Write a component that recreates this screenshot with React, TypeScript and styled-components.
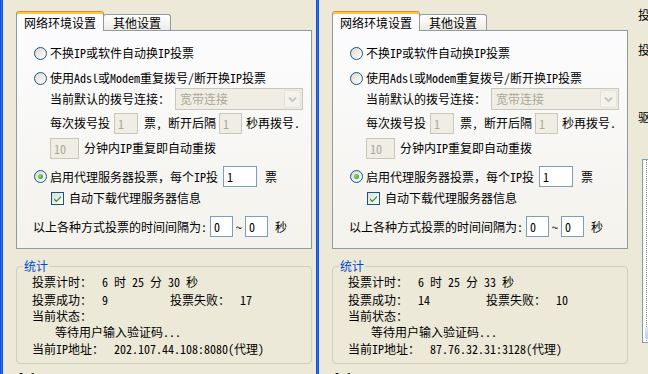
import React from "react";
import styled, { createGlobalStyle } from "styled-components";

const GlobalStyle = createGlobalStyle`
  html, body {
    margin: 0;
    padding: 0;
    background: #ece9d8;
  }
  body {
    font-family: "Noto Sans Mono CJK SC", "Noto Sans CJK SC", sans-serif;
    font-size: 12px;
    color: #000;
  }
`;

const Screen = styled.div`
  display: flex;
  width: 648px;
  height: 374px;
  overflow: hidden;
  background: #ece9d8;
`;

const Window = styled.div<{ $width: number }>`
  display: flex;
  flex: none;
  width: ${(p) => p.$width}px;
  height: 100%;
  overflow: hidden;
`;

const FrameEdge = styled.div`
  flex: none;
  width: 3px;
  height: 100%;
  background: linear-gradient(to right, #0a3fd2, #2a6ef0, #0b48dc);
`;

const Body = styled.div`
  display: flex;
  align-items: flex-start;
  gap: 10px;
  padding: 11px 0 0 13px;
`;

const MainColumn = styled.div`
  display: flex;
  flex-direction: column;
  flex: none;
  width: 296px;
`;

const TabStrip = styled.div`
  display: flex;
  flex: none;
  align-items: flex-end;
  height: 19px;
  position: relative;
  z-index: 1;
`;

const Tab = styled.div<{ $active?: boolean }>`
  box-sizing: border-box;
  display: flex;
  align-items: center;
  height: ${(p) => (p.$active ? 20 : 16)}px;
  margin-bottom: ${(p) => (p.$active ? -1 : 0)}px;
  margin-left: ${(p) => (p.$active ? 0 : -1)}px;
  padding: ${(p) => (p.$active ? "2px 7px 0" : "1px 9px 0")};
  border: 1px solid #919b9c;
  border-bottom: none;
  border-top-color: ${(p) => (p.$active ? "#e68b2c" : "#919b9c")};
  border-radius: 3px 3px 0 0;
  box-shadow: ${(p) => (p.$active ? "inset 0 2px 0 #ffc73c" : "none")};
  background: ${(p) =>
    p.$active ? "#fcfcfe" : "linear-gradient(#ffffff, #ecebe5)"};
  line-height: 14px;
  white-space: nowrap;
`;

const Panel = styled.div`
  box-sizing: border-box;
  display: flex;
  flex: none;
  flex-direction: column;
  height: 219px;
  padding: 12px 0 0 16px;
  border: 1px solid #919b9c;
  background: linear-gradient(#fcfcfe, #f3f2ec);
`;

const Row = styled.div<{ $top: number; $indent: number; $h: number }>`
  display: flex;
  flex: none;
  align-items: center;
  height: ${(p) => p.$h}px;
  margin-top: ${(p) => p.$top}px;
  margin-left: ${(p) => p.$indent}px;
  white-space: nowrap;
  line-height: 14px;
`;

const Text = styled.span<{ $gap?: number }>`
  margin-left: ${(p) => p.$gap ?? 0}px;
`;

const RadioDot = styled.span<{ $checked?: boolean }>`
  box-sizing: border-box;
  position: relative;
  flex: none;
  width: 13px;
  height: 13px;
  margin-right: 3px;
  border: 1px solid #1c5180;
  border-radius: 50%;
  background: linear-gradient(135deg, #dcd9cf, #ffffff);

  &::after {
    content: "";
    display: ${(p) => (p.$checked ? "block" : "none")};
    position: absolute;
    left: 3px;
    top: 3px;
    width: 5px;
    height: 5px;
    border-radius: 50%;
    background: radial-gradient(circle at 35% 35%, #7fe27c, #1c9a1c);
  }
`;

const CheckBox = styled.span`
  box-sizing: border-box;
  display: flex;
  align-items: center;
  justify-content: center;
  flex: none;
  width: 13px;
  height: 13px;
  margin-right: 5px;
  border: 1px solid #1c5180;
  background: linear-gradient(135deg, #dcdcd7, #ffffff);
`;

const Field = styled.input<{ $w: number }>`
  box-sizing: border-box;
  flex: none;
  width: ${(p) => p.$w}px;
  height: 21px;
  margin: 0;
  padding: 0 0 0 3px;
  border: 1px solid #7f9db9;
  background: #fff;
  color: #000;
  font: inherit;
  line-height: 19px;
  outline: none;

  &:disabled {
    border-color: #c9c7ba;
    background: #efede4;
    color: #aca899;
  }
`;

const Select = styled.div`
  box-sizing: border-box;
  display: flex;
  align-items: center;
  justify-content: space-between;
  width: 128px;
  height: 22px;
  margin-left: 5px;
  padding: 0 1px 0 4px;
  border: 1px solid #c9c7ba;
  background: #efede4;
  color: #aca899;
`;

const SelectButton = styled.span`
  box-sizing: border-box;
  display: flex;
  align-items: center;
  justify-content: center;
  width: 17px;
  height: 18px;
  border: 1px solid #e4e2d8;
  border-radius: 2px;
  background: #f3f2ec;
`;

const GroupBox = styled.fieldset`
  box-sizing: border-box;
  flex: none;
  height: 105px;
  margin: 10px 0 0;
  padding: 0 0 0 15px;
  border: 1px solid #d0d0bf;
  border-radius: 4px;
`;

const Legend = styled.legend`
  margin-left: -9px;
  padding: 0 1px;
  color: #0046d5;
  line-height: 14px;
`;

const StatRow = styled.div<{ $h: number }>`
  display: flex;
  align-items: center;
  height: ${(p) => p.$h}px;
  white-space: nowrap;
  line-height: 14px;
`;

const StatLabel = styled.span<{ $w?: number }>`
  flex: none;
  width: ${(p) => (p.$w ? `${p.$w}px` : "auto")};
  margin-right: ${(p) => (p.$w ? 0 : 10)}px;
`;

const StatValue = styled.span<{ $w?: number }>`
  flex: none;
  width: ${(p) => (p.$w ? `${p.$w}px` : "auto")};
  white-space: pre;
`;

const Indented = styled.span`
  margin-left: 23px;
`;

const FootLine = styled.div`
  flex: none;
  margin: 6px 0 0 2px;
  line-height: 14px;
`;

const SideColumn = styled.div`
  display: flex;
  flex-direction: column;
  flex: none;
  width: 40px;
`;

const SideLabel = styled.div<{ $top: number }>`
  flex: none;
  margin-top: ${(p) => p.$top}px;
  line-height: 14px;
  white-space: nowrap;
`;

const ListBox = styled.div`
  box-sizing: border-box;
  display: flex;
  flex: none;
  flex-direction: column;
  justify-content: flex-end;
  width: 30px;
  height: 184px;
  margin: 35px 0 0 4px;
  padding: 3px 0 3px 2px;
  border: 1px solid #7f9db9;
  background: #fff;
  background-image: repeating-linear-gradient(
    to bottom,
    #8a8a8a 0 1px,
    transparent 1px 2px
  );
  background-size: 1px 100%;
  background-position: 3px 0;
  background-repeat: no-repeat;
`;

const ListScroll = styled.div`
  height: 12px;
  background: linear-gradient(#dbe6fd, #b9cdf7);
  border-radius: 2px;
`;

const CheckMark = () => (
  <svg width="9" height="9" viewBox="0 0 9 9">
    <path
      d="M1 4.2 L3.4 6.6 L8 1.8 L8 3.6 L3.4 8.3 L1 5.9 Z"
      fill="#21a121"
    />
  </svg>
);

const Chevron = () => (
  <svg width="9" height="7" viewBox="0 0 9 7">
    <path d="M1 1.5 L4.5 5 L8 1.5" stroke="#c9c7ba" strokeWidth="2" fill="none" />
  </svg>
);

type Stats = {
  time: string;
  ok: string;
  fail: string;
  ip: string;
};

const SettingsPane = ({ stats }: { stats: Stats }) => (
  <MainColumn>
    <TabStrip>
      <Tab $active>网络环境设置</Tab>
      <Tab>其他设置</Tab>
    </TabStrip>
    <Panel>
      <Row $top={0} $indent={1} $h={20}>
        <RadioDot />
        <Text>不换IP或软件自动换IP投票</Text>
      </Row>
      <Row $top={5} $indent={1} $h={20}>
        <RadioDot />
        <Text>使用Adsl或Modem重复拨号/断开换IP投票</Text>
      </Row>
      <Row $top={0} $indent={17} $h={22}>
        <Text>当前默认的拨号连接：</Text>
        <Select>
          <span>宽带连接</span>
          <SelectButton>
            <Chevron />
          </SelectButton>
        </Select>
      </Row>
      <Row $top={2} $indent={17} $h={22}>
        <Text>每次拨号投</Text>
        <Field $w={24} defaultValue="1" disabled style={{ marginLeft: 4 }} />
        <Text $gap={6}>票, 断开后隔</Text>
        <Field $w={23} defaultValue="1" disabled style={{ marginLeft: 3 }} />
        <Text $gap={4}>秒再拨号.</Text>
      </Row>
      <Row $top={3} $indent={17} $h={22}>
        <Field $w={29} defaultValue="10" disabled />
        <Text $gap={5}>分钟内IP重复即自动重拨</Text>
      </Row>
      <Row $top={7} $indent={1} $h={21}>
        <RadioDot $checked />
        <Text>启用代理服务器投票，每个IP投</Text>
        <Field $w={34} defaultValue="1" readOnly style={{ marginLeft: 5 }} />
        <Text $gap={8}>票</Text>
      </Row>
      <Row $top={2} $indent={18} $h={18}>
        <CheckBox>
          <CheckMark />
        </CheckBox>
        <Text>自动下载代理服务器信息</Text>
      </Row>
      <Row $top={9} $indent={0} $h={21}>
        <Text>以上各种方式投票的时间间隔为:</Text>
        <Field $w={23} defaultValue="0" readOnly style={{ marginLeft: 3 }} />
        <Text $gap={3}>~</Text>
        <Field $w={23} defaultValue="0" readOnly style={{ marginLeft: 3 }} />
        <Text $gap={7}>秒</Text>
      </Row>
    </Panel>
    <GroupBox>
      <Legend>统计</Legend>
      <StatRow $h={18}>
        <StatLabel>投票计时：</StatLabel>
        <StatValue>{stats.time}</StatValue>
      </StatRow>
      <StatRow $h={17}>
        <StatLabel $w={70}>投票成功：</StatLabel>
        <StatValue $w={68}>{stats.ok}</StatValue>
        <StatLabel $w={70}>投票失败：</StatLabel>
        <StatValue>{stats.fail}</StatValue>
      </StatRow>
      <StatRow $h={16}>
        <StatLabel>当前状态：</StatLabel>
      </StatRow>
      <StatRow $h={15}>
        <Indented>等待用户输入验证码...</Indented>
      </StatRow>
      <StatRow $h={20}>
        <StatLabel>当前IP地址：</StatLabel>
        <StatValue>{stats.ip}</StatValue>
      </StatRow>
    </GroupBox>
    <FootLine>0.1</FootLine>
  </MainColumn>
);

export default function App() {
  return (
    <>
      <GlobalStyle />
      <Screen>
        <Window $width={316}>
          <FrameEdge />
          <Body>
            <SettingsPane
              stats={{
                time: "6 时 25 分 30 秒",
                ok: "9",
                fail: "17",
                ip: "202.107.44.108:8080(代理)",
              }}
            />
          </Body>
        </Window>
        <Window $width={332}>
          <FrameEdge />
          <Body>
            <SettingsPane
              stats={{
                time: "6 时 25 分 33 秒",
                ok: "14",
                fail: "10",
                ip: "87.76.32.31:3128(代理)",
              }}
            />
            <SideColumn>
              <SideLabel $top={-3}>投</SideLabel>
              <SideLabel $top={21}>投</SideLabel>
              <SideLabel $top={53}>驱</SideLabel>
              <ListBox>
                <ListScroll />
              </ListBox>
            </SideColumn>
          </Body>
        </Window>
      </Screen>
    </>
  );
}
